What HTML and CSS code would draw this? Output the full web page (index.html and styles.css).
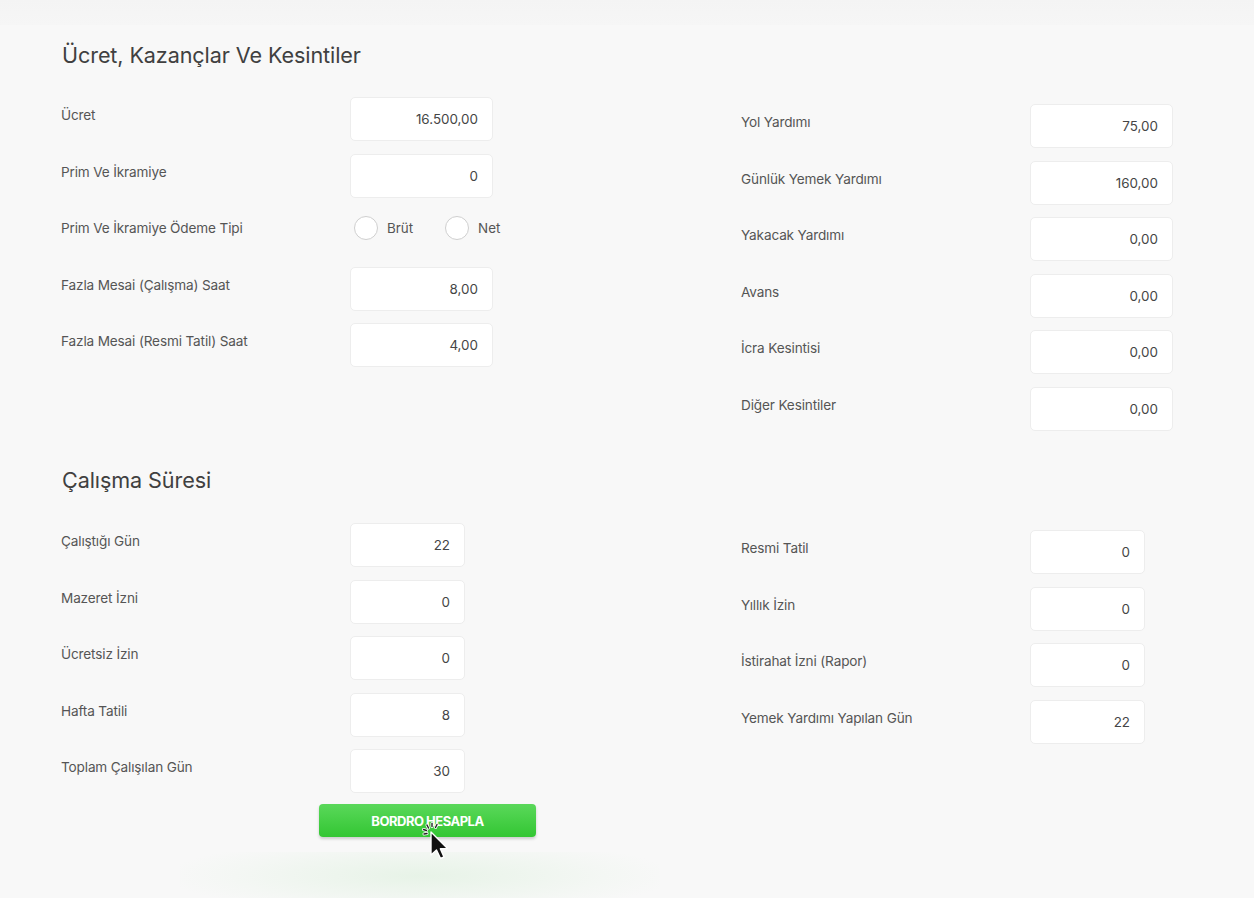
FILE: index.html
```html
<!DOCTYPE html>
<html lang="tr">
<head>
<meta charset="utf-8">
<title>Bordro Hesaplama</title>
<link rel="stylesheet" href="styles.css">
</head>
<body>
<div class="topband"></div>
<main class="page">
  <section class="section">
    <h2 class="section-title">Ücret, Kazançlar Ve Kesintiler</h2>
    <div class="columns">
      <div class="col">
        <div class="row"><span class="label">Ücret</span><div class="input wide">16.500,00</div></div>
        <div class="row"><span class="label">Prim Ve İkramiye</span><div class="input wide">0</div></div>
        <div class="row"><span class="label">Prim Ve İkramiye Ödeme Tipi</span>
          <div class="radios">
            <span class="radio"><span class="circle"></span>Brüt</span>
            <span class="radio"><span class="circle"></span>Net</span>
          </div>
        </div>
        <div class="row"><span class="label">Fazla Mesai (Çalışma) Saat</span><div class="input wide">8,00</div></div>
        <div class="row"><span class="label">Fazla Mesai (Resmi Tatil) Saat</span><div class="input wide">4,00</div></div>
      </div>
      <div class="col col-right">
        <div class="row"><span class="label">Yol Yardımı</span><div class="input wide">75,00</div></div>
        <div class="row"><span class="label">Günlük Yemek Yardımı</span><div class="input wide">160,00</div></div>
        <div class="row"><span class="label">Yakacak Yardımı</span><div class="input wide">0,00</div></div>
        <div class="row"><span class="label">Avans</span><div class="input wide">0,00</div></div>
        <div class="row"><span class="label">İcra Kesintisi</span><div class="input wide">0,00</div></div>
        <div class="row"><span class="label">Diğer Kesintiler</span><div class="input wide">0,00</div></div>
      </div>
    </div>
  </section>

  <section class="section section-2">
    <h2 class="section-title">Çalışma Süresi</h2>
    <div class="columns">
      <div class="col">
        <div class="row"><span class="label">Çalıştığı Gün</span><div class="input narrow">22</div></div>
        <div class="row"><span class="label">Mazeret İzni</span><div class="input narrow">0</div></div>
        <div class="row"><span class="label">Ücretsiz İzin</span><div class="input narrow">0</div></div>
        <div class="row"><span class="label">Hafta Tatili</span><div class="input narrow">8</div></div>
        <div class="row"><span class="label">Toplam Çalışılan Gün</span><div class="input narrow">30</div></div>
        <div class="button-wrap">
          <button class="btn">BORDRO HESAPLA</button>
          <svg class="cursor" width="30" height="40" viewBox="0 0 30 40">
            <g stroke="#fff" stroke-width="3" stroke-linecap="round">
              <line x1="5" y1="3" x2="6.5" y2="6"/>
              <line x1="10" y1="1.5" x2="10" y2="4.5"/>
              <line x1="15" y1="2.5" x2="13.5" y2="5.5"/>
              <line x1="1.5" y1="7.5" x2="4.5" y2="8.5"/>
              <line x1="2" y1="12" x2="5" y2="11.5"/>
            </g>
            <g stroke="#222" stroke-width="1.4" stroke-linecap="round">
              <line x1="5" y1="3" x2="6.5" y2="6"/>
              <line x1="10" y1="1.5" x2="10" y2="4.5"/>
              <line x1="15" y1="2.5" x2="13.5" y2="5.5"/>
              <line x1="1.5" y1="7.5" x2="4.5" y2="8.5"/>
              <line x1="2" y1="12" x2="5" y2="11.5"/>
            </g>
            <path d="M9 10 L9 33 L14.5 28 L18.5 36.5 L22 35 L18.3 26.8 L25.5 26.5 Z" fill="#111" stroke="#fff" stroke-width="1.4" stroke-linejoin="round"/>
          </svg>
        </div>
      </div>
      <div class="col col-right">
        <div class="row"><span class="label">Resmi Tatil</span><div class="input narrow">0</div></div>
        <div class="row"><span class="label">Yıllık İzin</span><div class="input narrow">0</div></div>
        <div class="row"><span class="label">İstirahat İzni (Rapor)</span><div class="input narrow">0</div></div>
        <div class="row"><span class="label">Yemek Yardımı Yapılan Gün</span><div class="input narrow">22</div></div>
      </div>
    </div>
  </section>
</main>
<div class="glow"></div>
</body>
</html>
```

FILE: styles.css
```css
html, body {
  margin: 0;
  padding: 0;
}
body {
  background: #f8f8f8;
  font-family: Inter, "Noto Sans", "Liberation Sans", sans-serif;
  color: #4a4a4a;
  width: 1254px;
  height: 898px;
  overflow: hidden;
  position: relative;
}
.topband {
  height: 25px;
  background: linear-gradient(to bottom, #f4f4f4, #f6f6f6);
}
.page {
  padding: 18px 0 0 61px;
}
.section-title {
  margin: 0 0 0 1px;
  font-size: 21.6px;
  line-height: 24px;
  font-weight: 400;
  color: #404040;
  letter-spacing: -0.1px;
}
.columns {
  display: flex;
  gap: 248px;
  margin-top: 30px;
}
.col {
  width: 432px;
  display: flex;
  flex-direction: column;
  gap: 12.6px;
}
.col-right {
  padding-top: 7px;
}
.section-2 {
  margin-top: 37px;
}
.section-2 .columns {
  margin-top: 31px;
}
.row {
  display: flex;
  align-items: flex-start;
  height: 44px;
}
.label {
  width: 289px;
  flex: none;
  font-size: 13.6px;
  line-height: 16px;
  padding-top: 10px;
  color: #555;
  letter-spacing: -0.15px;
}
.input {
  height: 44px;
  box-sizing: border-box;
  background: #fff;
  border: 1px solid #ededed;
  border-radius: 5px;
  font-size: 13.4px;
  line-height: 42px;
  text-align: right;
  padding-right: 14px;
  color: #454545;
}
.input.wide { width: 143px; }
.input.narrow { width: 115px; }
.radios {
  display: flex;
  gap: 32px;
  padding-top: 6px;
  margin-left: 4px;
}
.radio {
  display: flex;
  align-items: center;
  gap: 9px;
  font-size: 13.4px;
  color: #555;
}
.circle {
  width: 24px;
  height: 24px;
  box-sizing: border-box;
  border: 1px solid #cfcfcf;
  border-radius: 50%;
  background: #fff;
}
.button-wrap {
  position: relative;
  margin-top: -1.6px;
  margin-left: 258px;
  width: 217px;
}
.btn {
  display: block;
  width: 217px;
  height: 33px;
  border: none;
  border-radius: 4px;
  background: linear-gradient(to bottom, #5ad85a, #33c633);
  box-shadow: 0 2px 3px rgba(0,0,0,0.18);
  color: #fff;
  font-family: Inter, "Noto Sans", "Liberation Sans", sans-serif;
  font-weight: 700;
  font-size: 13px;
  letter-spacing: -0.5px;
  padding: 0;
}
.cursor {
  position: absolute;
  left: 103px;
  top: 18px;
}
.glow {
  position: absolute;
  left: 180px;
  top: 852px;
  width: 480px;
  height: 60px;
  background: radial-gradient(ellipse at 50% 40%, rgba(220,240,220,0.6), rgba(235,245,235,0.3) 55%, rgba(248,248,248,0) 75%);
  pointer-events: none;
  z-index: -1;
}
```
